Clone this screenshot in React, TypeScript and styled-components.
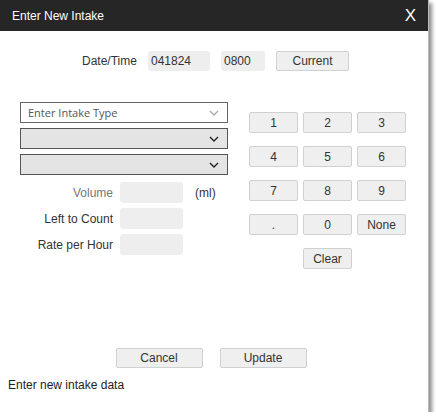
import React from "react";
import styled, { createGlobalStyle } from "styled-components";

const G = createGlobalStyle`
  body { margin: 0; background: #fff; font-family: "Liberation Sans", Arial, sans-serif; }
`;

const Win = styled.div`
  width: 428px; height: 412px; background: #fff; display: flex; flex-direction: column;
  box-shadow: 3px 3px 4px rgba(0,0,0,0.45); border-right: 1px solid #bbb;
`;
const Title = styled.div`
  height: 31px; background: #262626; color: #fff; display: flex; align-items: center;
  justify-content: space-between; padding: 0 12px 0 12px; font-size: 12px;
`;
const Close = styled.span` font-size: 17px; `;
const DateRow = styled.div`
  display: flex; align-items: center; margin: 20px 0 0 82px; font-size: 12px; color: #333;
`;
const Field = styled.div<{ w: number; h?: number }>`
  width: ${p => p.w}px; height: ${p => p.h ?? 20}px; background: #eeeeee; border-radius: 3px;
  font-size: 12px; color: #333; display: flex; align-items: center; padding-left: 3px; box-sizing: border-box;
`;
const Btn = styled.div<{ w: number; h?: number }>`
  width: ${p => p.w}px; height: ${p => p.h ?? 21}px; box-sizing: border-box; background: #efefef;
  border: 1px solid #d0d0d0; border-radius: 2px; font-size: 12px; color: #333;
  display: flex; align-items: center; justify-content: center;
`;
const Spacer = styled.div<{ w: number }>` width: ${p => p.w}px; `;
const DateLabel = styled.span` width: 66px; `;
const Body = styled.div` display: flex; margin-top: 31px; `;
const Left = styled.div` margin-left: 20px; width: 208px; display: flex; flex-direction: column; `;
const Select = styled.div<{ grey?: boolean }>`
  height: 21px; box-sizing: border-box; border: 1px solid ${p => (p.grey ? "#555" : "#666")};
  background: ${p => (p.grey ? "#e4e4e4" : "#fff")}; margin-bottom: 5px; display: flex; align-items: center;
  justify-content: space-between; padding: 0 8px 0 7px; font-family: "Open Sans", sans-serif; font-size: 11px; color: #555;
`;
const FormRow = styled.div<{ first?: boolean }>`
  display: flex; align-items: center; height: 21px; margin-top: ${p => (p.first ? 2 : 5)}px; font-size: 12px;
`;
const Lbl = styled.div<{ light?: boolean }>` width: 93px; text-align: right; padding-right: 7px; color: ${p => (p.light ? "#777" : "#333")}; `;
const Unit = styled.div` margin-left: 12px; color: #333; `;
const Pad = styled.div`
  margin: 10px 0 0 21px; display: grid; grid-template-columns: repeat(3, 49px); column-gap: 5px; row-gap: 13px;
`;
const Footer = styled.div` display: flex; justify-content: center; gap: 17px; margin-top: auto; padding-right: 6px; `;
const Status = styled.div` font-size: 12px; color: #222; padding: 10px 8px 20px; `;

const Chev = ({ c }: { c: string }) => (
  <svg width="10" height="6" viewBox="0 0 10 6"><path d="M1 1l4 4 4-4" fill="none" stroke={c} strokeWidth="1.4" /></svg>
);

export default function App() {
  const keys = ["1", "2", "3", "4", "5", "6", "7", "8", "9", ".", "0", "None"];
  return (
    <>
      <G />
      <Win>
        <Title><span>Enter New Intake</span><Close>X</Close></Title>
        <DateRow>
          <DateLabel>Date/Time</DateLabel>
          <Field w={62}>041824</Field>
          <Spacer w={11} />
          <Field w={44}>0800</Field>
          <Spacer w={11} />
          <Btn w={73} h={20}>Current</Btn>
        </DateRow>
        <Body>
          <Left>
            <Select>Enter Intake Type<Chev c="#aaa" /></Select>
            <Select grey><span /><Chev c="#222" /></Select>
            <Select grey><span /><Chev c="#222" /></Select>
            <FormRow first><Lbl light>Volume</Lbl><Field w={63} h={21} /><Unit>(ml)</Unit></FormRow>
            <FormRow><Lbl>Left to Count</Lbl><Field w={63} h={21} /></FormRow>
            <FormRow><Lbl>Rate per Hour</Lbl><Field w={63} h={21} /></FormRow>
          </Left>
          <Pad>
            {keys.map(k => <Btn key={k} w={49}>{k}</Btn>)}
            <span />
            <Btn w={49}>Clear</Btn>
          </Pad>
        </Body>
        <Footer>
          <Btn w={87} h={20}>Cancel</Btn>
          <Btn w={87} h={20}>Update</Btn>
        </Footer>
        <Status>Enter new intake data</Status>
      </Win>
    </>
  );
}
